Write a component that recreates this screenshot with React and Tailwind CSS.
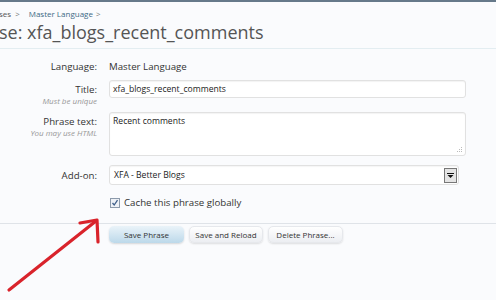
import React from "react";

const font = { fontFamily: '"Open Sans", "Liberation Sans", sans-serif' };

function Label({ label, hint, pt }) {
  return (
    <div className={"w-[97px] shrink-0 text-right " + pt}>
      <div className="text-[9.7px] text-[#333] leading-[13px] whitespace-nowrap">{label}</div>
      {hint && <div className="text-[8px] italic text-[#999] leading-[10px] whitespace-nowrap">{hint}</div>}
    </div>
  );
}

export default function App() {
  return (
    <div
      className="relative w-[496px] h-[300px] overflow-hidden bg-[#fafbfd] border-t-2 border-[#66798a]"
      style={font}
    >
      <div className="pt-[7px] text-[8px] leading-[10px] text-[#555] whitespace-nowrap">
        <span className="ml-[-1px]">ses</span>
        <span className="ml-[4px] text-[#777]">&gt;</span>
        <span className="ml-[9px] text-[#3d6a85]">Master Language</span>
        <span className="ml-[3px] text-[#777]">&gt;</span>
      </div>
      <div className="ml-[-1px] text-[18px] leading-[26px] text-[#555] whitespace-nowrap">
        se: xfa_blogs_recent_comments
      </div>
      <div className="mt-[3px] border-t border-[#e3edf1]" />

      <div className="pt-[11px]">
        <div className="flex">
          <Label label="Language:" pt="" />
          <div className="ml-[12px] text-[9.7px] text-[#333] leading-[13px]">Master Language</div>
        </div>

        <div className="flex mt-[7px]">
          <Label label="Title:" hint="Must be unique" pt="pt-[3px]" />
          <div className="ml-[12px] w-[357px] h-[18px] rounded-[3px] border border-[#e1e1e1] bg-white shadow-[inset_0_1px_1px_rgba(0,0,0,0.05)] px-[3px] text-[8.6px] leading-[16px] text-[#222]">
            xfa_blogs_recent_comments
          </div>
        </div>

        <div className="flex mt-[6px]">
          <Label label="Phrase text:" hint="You may use HTML" pt="pt-[3px]" />
          <div className="relative ml-[12px] w-[357px] h-[44px] rounded-[3px] border border-[#e1e1e1] bg-white shadow-[inset_0_1px_1px_rgba(0,0,0,0.05)] px-[3px] pt-[2px] text-[8.6px] leading-[13px] text-[#222]">
            Recent comments
            <svg className="absolute right-[2px] bottom-[2px]" width="6" height="6" viewBox="0 0 6 6">
              <rect x="4" y="0" width="1" height="1" fill="#bbb" />
              <rect x="2" y="2" width="1" height="1" fill="#bbb" />
              <rect x="4" y="2" width="1" height="1" fill="#bbb" />
              <rect x="0" y="4" width="1" height="1" fill="#bbb" />
              <rect x="2" y="4" width="1" height="1" fill="#bbb" />
              <rect x="4" y="4" width="1" height="1" fill="#bbb" />
            </svg>
          </div>
        </div>

        <div className="flex mt-[9px]">
          <Label label="Add-on:" pt="pt-[4px]" />
          <div className="ml-[12px] flex items-center justify-between w-[350px] h-[20px] rounded-[3px] border border-[#e1e1e1] bg-white shadow-[inset_0_1px_1px_rgba(0,0,0,0.04)] pl-[4px] pr-[1px] text-[8.6px] text-[#222]">
            <span>XFA - Better Blogs</span>
            <div className="w-[13px] h-[15px] border border-[#777] bg-[#e4e4e4] flex items-center justify-center">
              <svg width="7" height="5" viewBox="0 0 7 5">
                <rect x="0" y="0" width="7" height="1" fill="#111" />
                <polygon points="0.5,2 6.5,2 3.5,5" fill="#111" />
              </svg>
            </div>
          </div>
        </div>

        <div className="flex items-center h-[13px] ml-[110px] mt-[11px]">
          <div className="w-[10px] h-[10px] border border-[#8c9aab] bg-[#eef1f6] flex items-center justify-center">
            <svg width="8" height="8" viewBox="0 0 8 8">
              <path d="M1.5 4 L3.2 6 L6.5 1.2" stroke="#3f5f8a" strokeWidth="1.3" fill="none" />
            </svg>
          </div>
          <span className="ml-[4px] text-[9.7px] text-[#333] leading-[13px]">Cache this phrase globally</span>
        </div>
      </div>

      <div className="mt-[14px] border-t border-[#dfe3e8]" />

      <div className="flex gap-[5px] ml-[109px] mt-[2px]">
        <div className="w-[75px] h-[17px] rounded-[5px] bg-gradient-to-b from-[#eaf3f9] to-[#bcd9ea] shadow-[0_1px_2px_rgba(0,0,0,0.15)] text-[8px] text-[#333] flex items-center justify-center">
          Save Phrase
        </div>
        <div className="w-[74px] h-[17px] rounded-[5px] bg-gradient-to-b from-[#ffffff] to-[#eceef2] border border-[#e6e8ec] shadow-[0_1px_2px_rgba(0,0,0,0.12)] text-[8px] text-[#333] flex items-center justify-center">
          Save and Reload
        </div>
        <div className="w-[75px] h-[17px] rounded-[5px] bg-gradient-to-b from-[#ffffff] to-[#eceef2] border border-[#e6e8ec] shadow-[0_1px_2px_rgba(0,0,0,0.12)] text-[8px] text-[#333] flex items-center justify-center">
          Delete Phrase...
        </div>
      </div>

      <svg className="absolute left-0 top-[210px]" width="110" height="90" viewBox="0 210 110 90">
        <path d="M9 288 L96 219" stroke="#d9232b" strokeWidth="3.2" strokeLinecap="round" fill="none" />
        <path d="M80 221 L97 218 L98 240" stroke="#d9232b" strokeWidth="3.2" strokeLinecap="round" strokeLinejoin="round" fill="none" />
      </svg>
    </div>
  );
}
